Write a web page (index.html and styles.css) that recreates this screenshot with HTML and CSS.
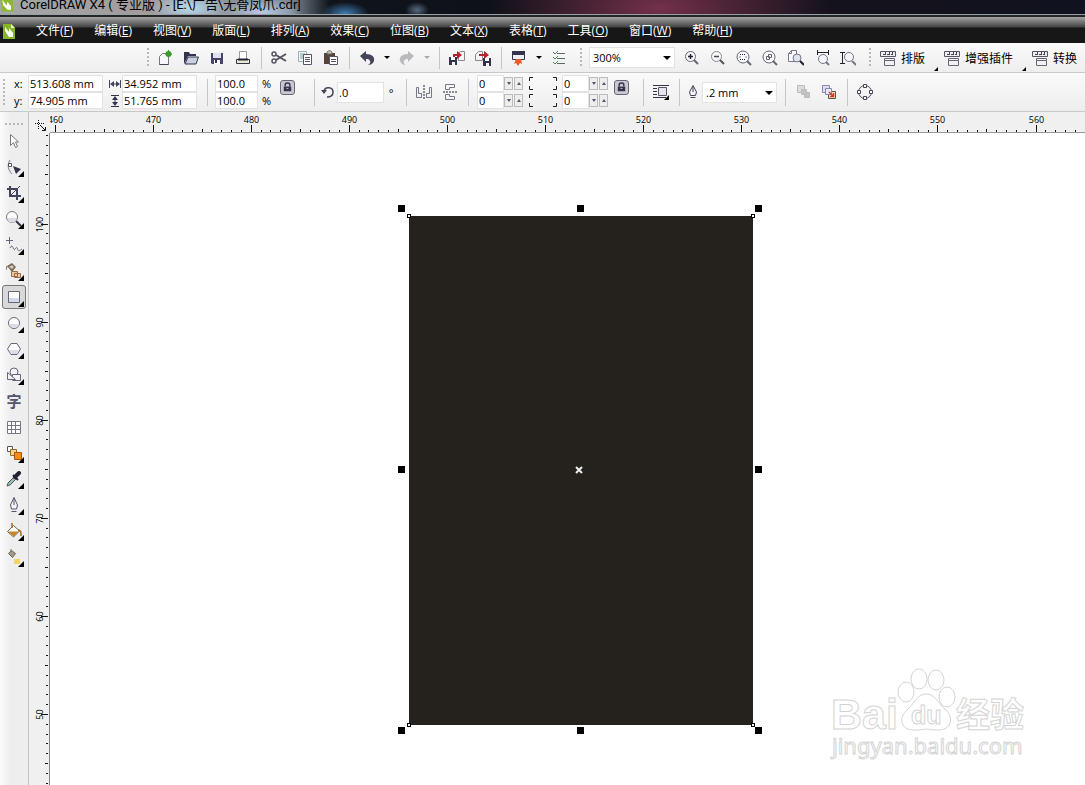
FILE: index.html
```
<!DOCTYPE html>
<html lang="zh-CN">
<head>
<meta charset="UTF-8">
<meta name="viewport" content="width=device-width, initial-scale=1.0">
<title>CorelDRAW X4</title>
<link rel="stylesheet" href="styles.css">
</head>
<body>

<header class="titlebar">
    <svg class="app-logo" viewBox="0 0 16 16"><path d="M0 0h14l1 13H2z" fill="#8cba2c"/><path d="M2 0l5 6 1-4 4 5v4H8L3 6z" fill="#fff"/></svg>
    <span>CorelDRAW X4 ( 专业版 ) - [E:\广告\无骨凤爪.cdr]</span>
</header>

<nav class="menubar">
    <svg class="doc-logo" viewBox="0 0 12 16"><path d="M0 1h8l4 4v11H0z" fill="#86b52c"/><path d="M8 1v4h4z" fill="#e6f3c8"/><path d="M2 4l4 5V5l4 5v4H6L2 8z" fill="#fff"/></svg>
    <button>文件(<u>F</u>)</button>
    <button>编辑(<u>E</u>)</button>
    <button>视图(<u>V</u>)</button>
    <button>版面(<u>L</u>)</button>
    <button>排列(<u>A</u>)</button>
    <button>效果(<u>C</u>)</button>
    <button>位图(<u>B</u>)</button>
    <button>文本(<u>X</u>)</button>
    <button>表格(<u>T</u>)</button>
    <button>工具(<u>O</u>)</button>
    <button>窗口(<u>W</u>)</button>
    <button>帮助(<u>H</u>)</button>
</nav>

<div class="toolbar">
    <i class="grip"></i>
    <button class="tool" aria-label="新建"><svg viewBox="0 0 16 16"><path d="M2.500 14.500v-8l3-3h6v11z" fill="#f6f6fb" stroke="#777"/><path d="M2.500 14.500h9" stroke="#445"/><circle cx="11.500" cy="4" r="3" fill="#3b9a2b"/><path d="M8 4h7M11.500 0v7" stroke="#3b9a2b"/></svg></button>
    <button class="tool" aria-label="打开"><svg viewBox="0 0 16 16"><path d="M1 14V2h5l1 2h6v2H5z" fill="#33334d"/><path d="M2 14l3-7h10.500L13 14z" fill="#c9d0de" stroke="#33334d"/></svg></button>
    <button class="tool" aria-label="保存"><svg viewBox="0 0 16 16"><path d="M2 3h12v11H3l-1-1z" fill="#44446a"/><path d="M4 3h8v5H4z" fill="#dfe2ee"/><path d="M5 10h6v4H5z" fill="#fff"/><path d="M6 10h2v3H6z" fill="#33335a"/></svg></button>
    <button class="tool" aria-label="打印"><svg viewBox="0 0 16 16"><path d="M4.500 9V1.500h7V9" fill="#fff" stroke="#999"/><path d="M1.500 9.500h13v4h-13z" fill="#e8e8d0" stroke="#334"/><path d="M3 9.500h10" stroke="#223" stroke-width="2"/></svg></button>
    <i class="sep"></i>
    <button class="tool" aria-label="剪切"><svg viewBox="0 0 16 16" fill="none" stroke="#555564" stroke-width="1.500"><circle cx="3" cy="4" r="2"/><circle cx="3" cy="11" r="2"/><path d="M5 5l10 6M5 10l10-6" stroke-width="2"/></svg></button>
    <button class="tool" aria-label="复制"><svg viewBox="0 0 16 16"><path d="M1.500 1.500h8v10h-8z" fill="#eef5f4" stroke="#9bb3b5"/><path d="M3 4h5M3 6h5M3 8h5" stroke="#86a3a5"/><path d="M6.500 4.500h8v10h-8z" fill="#fff" stroke="#555566"/><path d="M8 7.500h5M8 9.500h5M8 11.500h5" stroke="#555566"/></svg></button>
    <button class="tool" aria-label="粘贴"><svg viewBox="0 0 16 16"><path d="M1 3h11v11H1z" fill="#54443a"/><path d="M4 3c0-3 5-3 5 0v1H4z" fill="#cfc7b8" stroke="#666"/><path d="M6.500 6.500h8v8h-8z" fill="#fff" stroke="#555566"/><path d="M8 9.500h5M8 11.500h5" stroke="#555566"/></svg></button>
    <i class="sep"></i>
    <button class="tool" aria-label="撤消"><svg viewBox="0 0 16 16"><path d="M1 6l6-5v3c6 0 9 3 8 7-1 3-4 4-6 4 2-1 3-3 2-4-1-2-2-2-4-2v3z" fill="#44445a"/></svg></button>
    <button class="drop" aria-label="撤消列表"><i class="arrow"></i></button>
    <button class="tool" aria-label="重做"><svg viewBox="0 0 16 16"><path d="M15 6L9 1v3C3 4 0 7 1 11c1 3 4 4 6 4-2-1-3-3-2-4 1-2 2-2 4-2v3z" fill="#b9b9be"/></svg></button>
    <button class="drop" aria-label="重做列表"><i class="arrow faded"></i></button>
    <i class="sep"></i>
    <button class="tool" aria-label="导入"><svg viewBox="0 0 16 16"><path d="M9.500 10.500V3.500l2-2h4v9z" fill="#f4f4f8" stroke="#888"/><path d="M0 7h8v8H0z" fill="#33334d"/><path d="M2 7h4v3H2zM3 12h3v3H3z" fill="#fff"/><path d="M4 7V4h4V1l5 4-5 4V6H6v1z" fill="#b5222b"/></svg></button>
    <button class="tool" aria-label="导出"><svg viewBox="0 0 16 16"><path d="M.5 10.500v-6l3-3h4v9z" fill="#f4f4f8" stroke="#888"/><path d="M8 8h8v8H8z" fill="#33334d"/><path d="M10 8h4v3h-4zM11 13h3v3h-3z" fill="#fff"/><path d="M4 6V4h5V1l5 4-5 4V6z" fill="#b5222b"/></svg></button>
    <i class="sep"></i>
    <button class="tool" aria-label="应用程序启动器"><svg viewBox="0 0 16 16"><path d="M1.500 1.500h12v8h-12z" fill="#eceff5" stroke="#33334d"/><path d="M1 1h13v4H1z" fill="#33334d"/><path d="M5 9h5l1 5-2-1-2 3-2-3-2 1z" fill="#ee5a24"/></svg></button>
    <button class="drop" aria-label="启动器列表"><i class="arrow"></i></button>
    <button class="tool" aria-label="选项"><svg viewBox="0 0 16 16" fill="none"><path d="M6 3.500h8M6 8.500h8M6 13.500h8" stroke="#5c6a66"/><path d="M2 2l2 2 3-3M2 7l2 2 3-3M2 12l2 2 3-3" stroke="#4d8658"/></svg></button>
    <i class="grip"></i>
    <div class="combo zoom-level">
        <select aria-label="缩放级别"><option>300%</option><option>200%</option><option>100%</option></select>
        <i class="arrow"></i>
    </div>
    <button class="tool" aria-label="放大"><svg viewBox="0 0 16 16" fill="none" stroke="#666675"><circle cx="6.500" cy="6.500" r="5" fill="#f8f9fc"/><path d="M4 6.500h5M6.500 4v5" stroke="#223" stroke-width="1.500"/><path d="M10 10l4 4" stroke-width="2"/></svg></button>
    <button class="tool" aria-label="缩小"><svg viewBox="0 0 16 16" fill="none" stroke="#888890"><circle cx="6.500" cy="6.500" r="5" fill="#f8f9fc"/><path d="M4 6.500h5" stroke="#445" stroke-width="1.500"/><path d="M10 10l4 4" stroke="#555" stroke-width="2"/></svg></button>
    <button class="tool" aria-label="缩放选定范围"><svg viewBox="0 0 16 16" fill="none" stroke="#666675"><circle cx="7" cy="7" r="6" fill="#f8f9fc"/><path d="M4 4.500h6M4 9.500h6M3.500 7h1M9.500 7h1" stroke="#223" stroke-dasharray="1 1"/><path d="M11 11l4 4" stroke-width="2"/></svg></button>
    <button class="tool" aria-label="缩放全部对象"><svg viewBox="0 0 16 16" fill="none" stroke="#666675"><circle cx="7" cy="7" r="6" fill="#f8f9fc"/><path d="M6.500 4.500h3v3h-3zM4.500 6.500h3v3h-3z"/><path d="M11 11l4 4" stroke-width="2"/></svg></button>
    <button class="tool" aria-label="显示页面"><svg viewBox="0 0 16 16" fill="none" stroke="#77778a"><path d="M.5 11.500v-8l3-3h5v11z" fill="#fafafd"/><path d="M3.500.5v3h-3"/><circle cx="9" cy="8" r="4" fill="#dfe4ef"/><path d="M12 11l4 4" stroke="#223" stroke-width="2"/></svg></button>
    <button class="tool" aria-label="按页宽显示"><svg viewBox="0 0 16 16" fill="none" stroke="#77778a"><path d="M3.500 0v5M14.500 0v5M4 2.500h10" stroke="#223"/><circle cx="9" cy="9" r="4.500" fill="#f4f6fa"/><path d="M12 12l3 3" stroke-width="2"/></svg></button>
    <button class="tool" aria-label="按页高显示"><svg viewBox="0 0 16 16" fill="none" stroke="#77778a"><path d="M0 2.500h5M0 13.500h5M2.500 3v10" stroke="#223"/><circle cx="9" cy="7" r="4.500" fill="#f4f6fa"/><path d="M12 11l4 4" stroke-width="2"/></svg></button>
    <i class="grip"></i>
    <button class="plugin"><svg viewBox="0 0 16 16"><path d="M.5 1.500h15v5H.5z" fill="#eee" stroke="#556"/><path d="M3 4.500h3M7 4.500h3M11 4.500h2M5.500 2v2M9.500 2v2M12.500 2v2" stroke="#445"/><path d="M4.500 8.500h10v2h-10zM4.500 10.500h10v5h-10z" fill="#f2f2f6" stroke="#667"/></svg>排版<i class="corner"></i></button>
    <button class="plugin"><svg viewBox="0 0 16 16"><path d="M.5 1.500h15v5H.5z" fill="#eee" stroke="#556"/><path d="M3 4.500h3M7 4.500h3M11 4.500h2M5.500 2v2M9.500 2v2M12.500 2v2" stroke="#445"/><path d="M4.500 8.500h10v2h-10zM4.500 10.500h10v5h-10z" fill="#f2f2f6" stroke="#667"/></svg>增强插件<i class="corner"></i></button>
    <button class="plugin"><svg viewBox="0 0 16 16"><path d="M.5 1.500h15v5H.5z" fill="#eee" stroke="#556"/><path d="M3 4.500h3M7 4.500h3M11 4.500h2M5.500 2v2M9.500 2v2M12.500 2v2" stroke="#445"/><path d="M4.500 8.500h10v2h-10zM4.500 10.500h10v5h-10z" fill="#f2f2f6" stroke="#667"/></svg>转换</button>
</div>

<div class="propbar">
    <i class="grip"></i>
    <div class="fields">
        <label for="posX">x:</label><input type="text" id="posX" value="513.608 mm">
        <label for="posY">y:</label><input type="text" id="posY" value="74.905 mm">
    </div>
    <div class="fields">
        <label for="objW" aria-label="宽度"><svg viewBox="0 0 14 14" fill="none" stroke="#44445a"><path d="M1.500 3v8M12.500 3v8M3 7h8"/><path d="M2 7l4-3v6zM12 7L8 4v6z" fill="#44445a" stroke="none"/></svg></label><input type="text" id="objW" value="34.952 mm">
        <label for="objH" aria-label="高度"><svg viewBox="0 0 14 14" fill="none" stroke="#33334d"><path d="M3 1.500h8M3 12.500h8M7 3v8"/><path d="M7 2l3 4H4zM7 12l3-4H4z" fill="#33334d" stroke="none"/></svg></label><input type="text" id="objH" value="51.765 mm">
    </div>
    <i class="sep"></i>
    <div class="fields scale">
        <input type="text" id="scaleX" value="100.0"><label for="scaleX">%</label>
        <input type="text" id="scaleY" value="100.0"><label for="scaleY">%</label>
    </div>
    <button class="lock" aria-label="锁定比例"><svg viewBox="0 0 14 14"><path d="M4.500 6V4c0-2.500 5-2.500 5 0v2" fill="none" stroke="#33334d" stroke-width="1.500"/><path d="M3 6h8v5H3z" fill="#33334d"/><path d="M6 8h2" stroke="#ccd"/></svg></button>
    <i class="sep"></i>
    <div class="angle">
        <label for="angle" aria-label="旋转角度"><svg viewBox="0 0 14 14" fill="none" stroke="#44445a" stroke-width="1.500"><path d="M3 6c1-5 9-4 9 1 0 4-3 5-6 5"/><path d="M0 5l3 4 3-4z" fill="#44445a" stroke="none"/></svg></label>
        <input type="text" id="angle" value=".0"><span>°</span>
    </div>
    <i class="sep"></i>
    <button class="tool" aria-label="水平镜像"><svg viewBox="0 0 16 16" fill="none" stroke="#77778a"><path d="M.5 3.500h2v6h3v4h-5zM15.500 3.500h-2v6h-3v4h5z"/><path d="M8 1v14" stroke="#223" stroke-dasharray="2 1"/></svg></button>
    <button class="tool" aria-label="垂直镜像"><svg viewBox="0 0 16 16" fill="none" stroke="#77778a"><path d="M3.500.5h9v3h-5v2h-4zM3.500 15.500h9v-3h-5v-2h-4z"/><path d="M1 8h15" stroke="#223" stroke-dasharray="2 1"/></svg></button>
    <i class="sep"></i>
    <div class="spins">
        <input type="text" aria-label="左上角圆度" value="0"><button aria-label="减"><i class="down"></i></button><button aria-label="加"><i class="up"></i></button>
        <input type="text" aria-label="左下角圆度" value="0"><button aria-label="减"><i class="down"></i></button><button aria-label="加"><i class="up"></i></button>
    </div>
    <svg class="corners" viewBox="0 0 28 30" fill="none" stroke="#222"><path d="M4 .5H.5V4M.5 9v3.500H4M24 .5h3.500V4M27.500 9v3.500H24M4 17.500H.5V21M.5 26v3.500H4M24 17.500h3.500V21M27.500 26v3.500H24"/></svg>
    <div class="spins">
        <input type="text" aria-label="右上角圆度" value="0"><button aria-label="减"><i class="down"></i></button><button aria-label="加"><i class="up"></i></button>
        <input type="text" aria-label="右下角圆度" value="0"><button aria-label="减"><i class="down"></i></button><button aria-label="加"><i class="up"></i></button>
    </div>
    <button class="lock near" aria-label="全部圆角"><svg viewBox="0 0 14 14"><path d="M4.500 6V4c0-2.500 5-2.500 5 0v2" fill="none" stroke="#33334d" stroke-width="1.500"/><path d="M3 6h8v5H3z" fill="#33334d"/><path d="M6 8h2" stroke="#ccd"/></svg></button>
    <i class="sep"></i>
    <button class="tool" aria-label="段落文本换行"><svg viewBox="0 0 16 16"><path d="M0 1.500h16M0 4.500h4M0 7.500h4M0 10.500h4M0 13.500h13" stroke="#33334d"/><path d="M5.500 3.500h8v8h-8z" fill="#e4e4ee" stroke="#556"/><path d="M16 11v5h-5z"/></svg></button>
    <i class="sep"></i>
    <div class="outline-width">
        <label for="outline" aria-label="轮廓宽度"><svg viewBox="0 0 14 14" fill="#f4f4f8" stroke="#44445a"><path d="M7 .5L3.500 7l1 3.500h5l1-3.500z"/><path d="M7 1v6M4.500 12.500h5"/></svg></label>
        <div class="combo">
            <select id="outline"><option>.2 mm</option><option>.5 mm</option><option>1.0 mm</option></select>
            <i class="arrow"></i>
        </div>
    </div>
    <i class="sep"></i>
    <button class="tool" aria-label="到图层前面"><svg viewBox="0 0 16 16" stroke="#bbb" fill="#ddd"><path d="M2.500 1.500h7v7h-7z"/><path d="M9.500 8.500h5v5h-5z" fill="#c4c4c4"/><path d="M6.500 5.500h5v5h-5z" fill="#c4c4c4"/></svg></button>
    <button class="tool" aria-label="到图层后面"><svg viewBox="0 0 16 16"><path d="M7.500 7.500h7v7h-7z" fill="#f6dcc0" stroke="#554"/><path d="M1.500 1.500h7v7h-7z" fill="#dcdcf2" stroke="#8888b4"/><path d="M4.500 4.500h6v6h-6z" fill="#e8e8f6" stroke="#8888b4"/><path d="M8 8l4 4M12.500 9v3.500H9" fill="none" stroke="#d8391f" stroke-width="1.500"/></svg></button>
    <i class="sep"></i>
    <button class="tool" aria-label="转换为曲线"><svg viewBox="0 0 16 16" fill="#fff" stroke="#44445a"><circle cx="8" cy="8" r="6.500" fill="none"/><path d="M6.500.5h3v3h-3zM6.500 12.500h3v3h-3zM.5 6.500h3v3h-3zM12.500 6.500h3v3h-3z"/></svg></button>
</div>

<main class="workspace">
    <aside class="toolbox">
        <i class="grip"></i>
        <button aria-label="挑选"><svg viewBox="0 0 16 16"><path d="M4.500 1.500v11l3-3 2 5 2-1-2-4.500h3z" fill="#fff" stroke="#77777f"/></svg></button>
        <button class="more" aria-label="形状"><svg viewBox="0 0 16 16"><path d="M4 1c-3 5-2 10 2 14" fill="none" stroke="#77777f"/><path d="M2.500 4.500h3v3h-3z" fill="#fff" stroke="#556"/><path d="M7 7l8 3-5 5z" fill="#33334d"/></svg></button>
        <button class="more" aria-label="裁剪"><svg viewBox="0 0 16 16" fill="none" stroke="#44445a" stroke-width="2"><path d="M4 1v10h11M1 4h10v11"/><path d="M4 11L14 1" stroke-width="1"/></svg></button>
        <button class="more" aria-label="缩放"><svg viewBox="0 0 16 16"><path d="M10 10l5 5" stroke="#334" stroke-width="2"/><circle cx="6" cy="6" r="5.500" fill="#fbfbfb" stroke="#77777f"/><path d="M1.500 7h9a4.500 4.500 0 0 1-9 0z" fill="#dcdce2"/></svg></button>
        <button class="more" aria-label="手绘"><svg viewBox="0 0 16 16" fill="none" stroke="#66667a"><path d="M3.500 0v7M0 3.500h7M4 11c3-6 3 4 5 1s2-1 3 1 2 0 4-1"/></svg></button>
        <button class="more" aria-label="智能填充"><svg viewBox="0 0 16 16"><path d="M1 3l5-3 4 4-4 5z" fill="#77675a"/><path d="M3 4l3-2 2 2-2 2z" fill="#d8c8b8"/><path d="M1 3L0 7" stroke="#77675a"/><path d="M5.500 8.500h6v5h-6zM8.500 10.500h6v4h-6z" fill="#f2c59a" stroke="#956b48"/></svg></button>
        <button class="more active" aria-label="矩形"><svg viewBox="0 0 16 16"><path d="M2.500 2.500h11v11h-11z" fill="#fff" stroke="#66667a"/><path d="M3 9h10v4H3z" fill="#d5d8e6"/></svg></button>
        <button class="more" aria-label="椭圆形"><svg viewBox="0 0 16 16"><circle cx="8" cy="8" r="5.500" fill="#fff" stroke="#66667a"/><path d="M3 9h10c-1 5-9 5-10 0z" fill="#dddde6"/></svg></button>
        <button class="more" aria-label="多边形"><svg viewBox="0 0 16 16"><path d="M1.500 8L5 2.500h6L14.500 8 11 13.500H5z" fill="#fff" stroke="#66667a"/><path d="M3 9h10l-2 4H5z" fill="#dddde6"/></svg></button>
        <button class="more" aria-label="基本形状"><svg viewBox="0 0 16 16" fill="#f2f2f7" stroke="#66667a"><circle cx="8" cy="5" r="4"/><path d="M6.500 7.500h8v6h-8z"/><path d="M1.500 5.500v7h8z"/></svg></button>
        <button class="glyph" aria-label="文本">字</button>
        <button aria-label="表格"><svg viewBox="0 0 16 16" fill="#fff" stroke="#77778a"><path d="M1.500 2.500h13v12h-13zM5.500 2.500v12M9.500 2.500v12M1.500 6.500h13M1.500 10.500h13"/></svg></button>
        <button class="more" aria-label="交互式调和"><svg viewBox="0 0 16 16"><path d="M1.500 1.500h5v5h-5z" fill="#fff" stroke="#556"/><path d="M4.500 4.500h6v6h-6z" fill="#fbd387" stroke="#976a2c"/><path d="M8.500 7.500h7v7h-7z" fill="#f68b12" stroke="#a95408"/></svg></button>
        <button class="more" aria-label="滴管"><svg viewBox="0 0 16 16"><path d="M1 15l1-3 6-6 2 2-6 6z" fill="#9cc0b0" stroke="#556"/><path d="M7 4l5 5" stroke="#223" stroke-width="2"/><path d="M9 6l4-4" stroke="#223" stroke-width="4" stroke-linecap="round"/></svg></button>
        <button class="more" aria-label="轮廓"><svg viewBox="0 0 16 16" fill="#f4f4f8" stroke="#55556a"><path d="M8 .5L4.500 8l1 4h5l1-4z"/><path d="M8 1v7M5.500 14.500h5"/></svg></button>
        <button class="more" aria-label="填充"><svg viewBox="0 0 16 16"><path d="M1.500 8.500l6-6 6 5.500-6 6z" fill="#fff" stroke="#665"/><path d="M2 8.500h11l-5.500 5z" fill="#c98423"/><path d="M6 5V0M12 7c3 0 3 2 3 6" fill="none" stroke="#a66a1c" stroke-width="1.500"/></svg></button>
        <button class="more" aria-label="交互式填充"><svg viewBox="0 0 16 16"><path d="M2.500 4.500l3-3 4 3-3 4z" fill="#a89a8a" stroke="#665"/><path d="M5 3V0" stroke="#776"/><path d="M8 10h6v5H8z" fill="#f1d569"/></svg></button>
    </aside>
    <div class="origin"><svg viewBox="0 0 12 12" fill="none" stroke="#111"><path d="M3.500 0v9M0 3.500h10" stroke-dasharray="1 1"/><path d="M5 5l5 5M10.500 7v3.500H7"/></svg></div>
    <svg class="ruler-h" id="rulerH"></svg>
    <svg class="ruler-v" id="rulerV"></svg>
    <section class="canvas">
        <div class="shape">
            <i class="node n1"></i><i class="node n2"></i><i class="node n3"></i><i class="node n4"></i>
            <svg class="center" viewBox="0 0 8 8"><path d="M1 1l6 6M7 1L1 7" stroke="#eee" stroke-width="2"/></svg>
            <div class="handles">
                <i></i><i></i><i></i>
                <i></i><b></b><i></i>
                <i></i><i></i><i></i>
            </div>
        </div>
        <svg class="watermark" viewBox="0 0 200 100" width="200" height="100">
            <g fill="#fff" stroke="#d4d4d4">
                <ellipse cx="77" cy="29" rx="8" ry="10"/>
                <ellipse cx="90" cy="16" rx="8" ry="10"/>
                <ellipse cx="107" cy="17" rx="8" ry="10"/>
                <ellipse cx="118" cy="34" rx="8" ry="10"/>
                <path d="M97 31c-8 0-11 8-17 14-7 6-9 12-6 17 4 7 14 5 23 4 9 1 19 3 23-4 3-5 2-11-5-17-6-5-9-14-18-14z"/>
                <text x="2" y="66" class="wm-logo">Bai</text>
                <text x="82" y="61" class="wm-du">du</text>
                <text x="127" y="64" class="wm-cjk">经验</text>
                <text x="3" y="91" class="wm-url">jingyan.baidu.com</text>
            </g>
        </svg>
    </section>
</main>

<script>
var unit = 9.81; // pixels per millimetre at 300%

function line(x1, y1, x2, y2) {
    return `<path d="M${x1} ${y1}L${x2} ${y2}"/>`;
}

// tick length for a value in mm
function tickSize(mm) {
    if (mm % 10 === 0) return 7;
    return mm % 5 === 0 ? 3 : 2;
}

function drawHorizontal() {
    var ruler = document.getElementById("rulerH");
    var out = "";
    for (var mm = 460; 5 + (mm - 460) * unit < ruler.clientWidth; mm++) {
        var x = Math.floor(5 + (mm - 460) * unit) + 0.5;
        out += line(x, 20 - tickSize(mm), x, 20);
        if (mm % 10 === 0) out += `<text x="${x}" y="11">${mm}</text>`;
    }
    ruler.innerHTML = out;
}

function drawVertical() {
    var ruler = document.getElementById("rulerV");
    var out = "";
    for (var mm = 109; 91 + (100 - mm) * unit < ruler.clientHeight; mm--) {
        var y = Math.floor(91 + (100 - mm) * unit) + 0.5;
        out += line(19 - tickSize(mm), y, 19, y);
        if (mm % 10 === 0) out += `<text transform="translate(14 ${y}) rotate(-90)">${mm}</text>`;
    }
    ruler.innerHTML = out;
}

drawHorizontal();
drawVertical();
</script>

</body>
</html>
```
FILE: styles.css
```
* {
    box-sizing: border-box;
}
body {
    margin: 0;
    height: 100vh;
    display: flex;
    flex-direction: column;
    overflow: hidden;
    font-family: "Open Sans", "Noto Sans CJK SC", sans-serif;
    font-size: 11px;
    color: #000;
    background-color: #f0f0f0;
}
button {
    padding: 0;
    border: none;
    background: none;
    font: inherit;
    color: inherit;
}
input, select {
    min-width: 0;
    margin: 0;
    border: 1px solid #e2e2e2;
    background-color: #fff;
    font: inherit;
    color: #000;
    border-radius: 0;
}
svg {
    display: block;
    flex: none;
}

/* title and menu */
.titlebar {
    flex: none;
    height: 15px;
    display: flex;
    align-items: flex-end;
    gap: 5px;
    overflow: hidden;
    border-bottom: 1px solid #9a9fa2;
    background:
        radial-gradient(ellipse 24px 12px at 345px 14px, #3f7fb8, transparent),
        radial-gradient(ellipse 12px 8px at 417px 10px, #56697f, transparent),
        radial-gradient(ellipse 40px 16px at 190px 8px, #b4dcf0, transparent),
        radial-gradient(ellipse 40px 14px at 262px 12px, #b9c9e8, transparent),
        radial-gradient(ellipse 170px 60px at 660px 8px, #74304a, transparent),
        linear-gradient(90deg, #a3a8a6 0, #a39a9e 150px, #7c8a94 290px, #10141c 330px, #0e1118 480px, #15121c 800px, #10121f 100%);
    font-family: Roboto, "Noto Sans CJK SC", sans-serif;
    font-size: 13px;
    line-height: 18px;
}
.titlebar span {
    white-space: nowrap;
}
.app-logo {
    width: 15px;
    height: 14px;
}
.menubar {
    flex: none;
    height: 28px;
    padding: 1px 0 0 3px;
    display: flex;
    align-items: center;
    gap: 21px;
    border-top: 2px solid #20262a;
    background: linear-gradient(#a5a5a5, #444 10px, #171717 11px, #171717);
    font-size: 12px;
    line-height: 20px;
    color: #fff;
}
.menubar button {
    white-space: nowrap;
}
.doc-logo {
    width: 12px;
    height: 16px;
}

/* shared bar parts */
.toolbar, .propbar {
    flex: none;
    display: flex;
    align-items: center;
    overflow: hidden;
    background: linear-gradient(#fafafa, #eee);
    border-bottom: 1px solid #c9c9c9;
}
.toolbar {
    height: 30px;
    padding-left: 139px;
}
.propbar {
    height: 39px;
}
.grip {
    flex: none;
    width: 2px;
    height: 20px;
    margin: 0 7px 0 8px;
    background: repeating-linear-gradient(#b8b8b8 0 2px, transparent 2px 4px);
}
.toolbar > .grip:first-child {
    margin-right: 3px;
}
.sep {
    flex: none;
    width: 1px;
    height: 22px;
    margin: 0 4px 0 5px;
    background-color: #c6c6c6;
}
.tool {
    flex: none;
    width: 26px;
    height: 24px;
    display: grid;
    place-items: center;
}
.tool svg, .plugin svg {
    width: 16px;
    height: 16px;
}
.drop {
    flex: none;
    width: 14px;
    height: 24px;
    display: grid;
    place-items: center;
}
.arrow {
    border: 4px solid transparent;
    border-top-color: #000;
    border-bottom: none;
}
.drop .arrow {
    border-width: 3px;
    border-bottom: none;
}
.arrow.faded {
    border-top-color: #aaa;
}
.combo {
    position: relative;
}
.combo select {
    width: 100%;
    height: 21px;
    padding: 0 3px;
    appearance: none;
}
.combo .arrow {
    position: absolute;
    right: 4px;
    top: 9px;
    pointer-events: none;
}
.zoom-level {
    flex: none;
    width: 86px;
    margin-right: 4px;
}
.toolbar .grip + .plugin {
    margin-left: 2px;
}
.plugin {
    flex: none;
    display: flex;
    align-items: center;
    gap: 5px;
    height: 26px;
    font-size: 12px;
    white-space: nowrap;
}
.corner {
    align-self: flex-end;
    margin: 0 6px 0 4px;
    border: 2px solid;
    border-color: transparent #000 #000 transparent;
}

/* property bar */
.propbar .grip {
    height: 26px;
    margin: 0 9px 0 3px;
}
.propbar .sep {
    height: 27px;
}
.fields {
    flex: none;
    display: grid;
    grid-template-columns: 14px 75px;
    align-items: center;
    margin-right: 5px;
}
.fields input, .spins input {
    height: 17px;
    padding: 0 1px;
}
.fields svg, .angle svg, .outline-width svg {
    width: 14px;
    height: 14px;
}
.fields.scale {
    grid-template-columns: 43px 10px;
    column-gap: 4px;
    margin: 0 8px 0 3px;
}
.lock {
    flex: none;
    width: 15px;
    height: 15px;
    margin: 0 9px 10px 0;
    border: 1px solid #66667a;
    border-radius: 3px;
    background-color: #c9c9d2;
}
.lock.near {
    margin-left: 5px;
}
.scale + .lock {
    margin-right: 14px;
}
.angle, .outline-width {
    flex: none;
    display: flex;
    align-items: center;
    gap: 2px;
    margin: 0 3px 0 2px;
}
.angle {
    margin-right: 5px;
}
.angle input {
    width: 47px;
    height: 21px;
    padding: 0 1px;
}
.angle span {
    width: 10px;
    text-align: center;
}
.outline-width .combo {
    width: 75px;
}
.spins {
    flex: none;
    display: grid;
    grid-template-columns: 27px 10px 10px;
    align-items: center;
}
.sep + .spins {
    margin-left: 4px;
}
.spins button {
    display: grid;
    place-items: center;
    width: 9px;
    height: 13px;
    border: 1px solid #bbb;
    background-color: #eee;
}
.up, .down {
    border: 2px solid transparent;
}
.up {
    border-bottom: 3px solid #556;
    border-top: none;
}
.down {
    border-top: 3px solid #556;
    border-bottom: none;
}
.corners {
    width: 28px;
    height: 30px;
    margin: 0 5px;
}

/* drawing area */
.workspace {
    flex: 1;
    min-height: 0;
    display: grid;
    grid-template-columns: 29px 21px 1fr;
    grid-template-rows: 21px 1fr;
}
.toolbox {
    grid-row: 1 / 3;
    display: flex;
    flex-direction: column;
    gap: 2px;
    padding: 11px 2px 0;
    border-right: 1px solid #c4c4c4;
    background: linear-gradient(90deg, #fcfcfc, #eee 10px);
}
.toolbox .grip {
    width: 18px;
    height: 2px;
    margin: 0 3px 2px;
    background: repeating-linear-gradient(90deg, #b8b8b8 0 2px, transparent 2px 4px);
}
.toolbox button {
    flex: none;
    position: relative;
    width: 24px;
    height: 24px;
    display: grid;
    place-items: center;
    border: 1px solid transparent;
}
.toolbox svg {
    width: 16px;
    height: 16px;
}
.toolbox .more::after {
    content: "";
    position: absolute;
    right: 1px;
    bottom: 1px;
    border: 3px solid;
    border-color: transparent #000 #000 transparent;
}
.toolbox .active {
    border-color: #77777a;
    border-radius: 3px;
    background-color: #d8d8d8;
}
.toolbox .glyph {
    font-size: 15px;
    font-weight: bold;
    line-height: 20px;
    color: #55556a;
}
.origin {
    display: grid;
    place-items: end;
    padding: 0 3px 1px 0;
}
.origin svg {
    width: 12px;
    height: 12px;
}
.ruler-h, .ruler-v {
    width: 100%;
    height: 100%;
    overflow: hidden;
    stroke: #111;
}
.ruler-h {
    border-bottom: 1px solid #999;
}
.ruler-v {
    border-right: 1px solid #888;
}
.ruler-h text, .ruler-v text {
    stroke: none;
    fill: #000;
    font-size: 9px;
    text-anchor: middle;
}
.canvas {
    position: relative;
    overflow: hidden;
    background-color: #fff;
}
.shape {
    position: absolute;
    left: 359px;
    top: 83px;
    width: 344px;
    height: 509px;
    background-color: #25211d;
}
.handles {
    position: absolute;
    inset: -11px -9px -9px -11px;
    display: grid;
    grid-template-columns: repeat(3, 7px);
    justify-content: space-between;
    align-content: space-between;
}
.handles i {
    width: 7px;
    height: 7px;
    background-color: #000;
}
.center {
    position: absolute;
    left: calc(50% - 6px);
    top: calc(50% - 5px);
    width: 8px;
    height: 8px;
}
.node {
    position: absolute;
    width: 4px;
    height: 4px;
    border: 1px solid #000;
    background-color: #fff;
}
.n1 { left: -2px; top: -2px; }
.n2 { right: -2px; top: -2px; }
.n3 { left: -2px; bottom: -2px; }
.n4 { right: -2px; bottom: -2px; }
.watermark {
    position: absolute;
    right: 56px;
    bottom: 22px;
}
.wm-logo {
    font: bold 43px "Liberation Sans", sans-serif;
}
.wm-du {
    font: bold 25px "Liberation Sans", sans-serif;
}
.wm-cjk {
    font: bold 34px "Noto Sans CJK SC", sans-serif;
}
.wm-url {
    font: 22px "Noto Sans", sans-serif;
}
```
